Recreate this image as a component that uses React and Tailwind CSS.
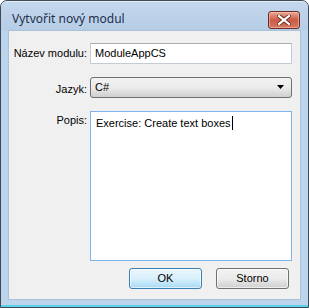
export default function App() {
  const font = { fontFamily: '"Liberation Sans", Arial, sans-serif' };
  return (
    <div className="w-[309px] h-[308px] bg-white" style={font}>
      <div className="w-[309px] h-[308px] border border-[#3f4a57] rounded-t-[7px] bg-[#bcd4ec] flex flex-col overflow-hidden">
        {/* title bar */}
        <div className="h-[29px] flex items-start bg-gradient-to-b from-[#c3d7ed] to-[#b6cde6] border-t border-t-[#e6eef8] rounded-t-[6px]">
          <div className="pl-[11px] pt-[10px] text-[12px] leading-[14px] text-[#1e2f4a]" style={{ fontFamily: '"Noto Sans", "Open Sans", sans-serif' }}>
            Vytvořit nový modul
          </div>
          <div className="ml-auto mr-[8px] mt-[9px] w-[32px] h-[18px] rounded-[3px] border border-[#6b2b23] bg-gradient-to-b from-[#e9a898] via-[#cc5a45] to-[#d47860] flex items-center justify-center shadow-[inset_0_0_0_1px_rgba(255,210,200,0.5)]">
            <svg width="14" height="10" viewBox="0 0 14 10">
              <path d="M2 1 L12 9 M12 1 L2 9" stroke="#6b2b23" strokeWidth="4" strokeLinecap="square" />
              <path d="M2 1 L12 9 M12 1 L2 9" stroke="#ffffff" strokeWidth="2.2" strokeLinecap="square" />
            </svg>
          </div>
        </div>
        {/* client area */}
        <div className="mx-[7px] h-[270px] bg-[#f0f0f0] border border-[#a9c0d8] flex flex-col text-[11px] text-black">
          <div className="grid grid-cols-[78px_202px] gap-x-[3px] pt-[12px]">
            <div className="h-[21px] flex items-center justify-end">Název modulu:</div>
            <div className="h-[21px] bg-white border border-[#c4cbd3] border-t-[#abadb3] flex items-center pl-[4px]">ModuleAppCS</div>

            <div className="h-[13px] col-span-2" />

            <div className="h-[21px] flex items-center justify-end pt-[3px]">Jazyk:</div>
            <div className="h-[21px] rounded-[3px] border border-[#707070] bg-gradient-to-b from-[#f2f2f2] via-[#ebebeb] to-[#cfcfcf] flex items-center pl-[4px] pr-[6px]">
              <span>C#</span>
              <svg className="ml-auto" width="8" height="5" viewBox="0 0 8 5">
                <path d="M0 0 H7 L3.5 4 Z" fill="#000" />
              </svg>
            </div>

            <div className="h-[13px] col-span-2" />

            <div className="h-[150px] flex items-start justify-end pt-[1px]">Popis:</div>
            <div className="h-[150px] bg-white border border-[#7eb4ea] pl-[5px] pt-[4px] flex items-start">
              <span className="leading-[14px]">Exercise: Create text boxes</span>
              <span className="w-px h-[14px] bg-black ml-[1px]" />
            </div>
          </div>
          <div className="flex justify-end gap-[14px] pr-[11px] mt-[7px]">
            <div className="w-[73px] h-[21px] rounded-[3px] border border-[#3c7fb1] bg-gradient-to-b from-[#eaf6fd] via-[#d9f0fc] to-[#a7d9f5] flex items-center justify-center shadow-[inset_0_0_0_1px_rgba(255,255,255,0.6)]">OK</div>
            <div className="w-[73px] h-[21px] rounded-[3px] border border-[#707070] bg-gradient-to-b from-[#f2f2f2] via-[#ebebeb] to-[#cfcfcf] flex items-center justify-center shadow-[inset_0_0_0_1px_rgba(255,255,255,0.6)]">Storno</div>
          </div>
        </div>
        <div className="flex-1 border-b-2 border-b-[#5ed0e8]" />
      </div>
    </div>
  );
}
